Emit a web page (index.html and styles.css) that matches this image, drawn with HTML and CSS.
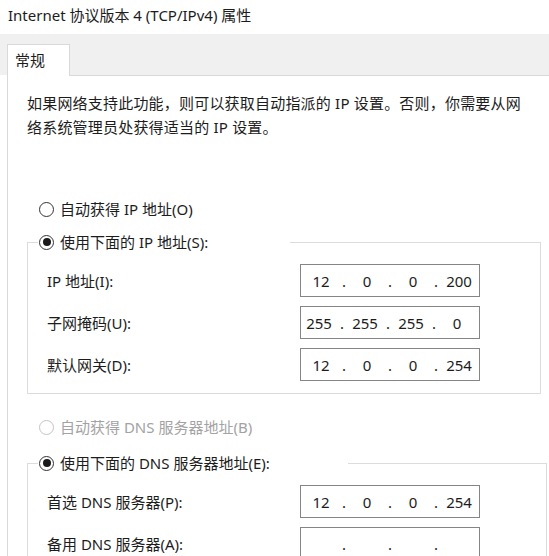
FILE: index.html
```html
<!DOCTYPE html>
<html lang="zh-CN">
<head>
<meta charset="utf-8">
<title>Internet 协议版本 4 (TCP/IPv4) 属性</title>
<link rel="stylesheet" href="styles.css">
</head>
<body>
<div class="title">Internet 协议版本 4 (TCP/IPv4) 属性</div>
<div class="tabstrip">
  <div class="tab">常规</div>
</div>
<div class="panel">
  <p class="desc">如果网络支持此功能，则可以获取自动指派的 IP 设置。否则，你需要从网<br>络系统管理员处获得适当的 IP 设置。</p>

  <div class="radio radio-first"><span class="dot-radio"></span><span>自动获得 IP 地址(O)</span></div>

  <fieldset class="group group-ip">
    <legend class="legend legend-ip"><span class="dot-radio checked"></span><span>使用下面的 IP 地址(S):</span></legend>
    <div class="row">
      <span class="label">IP 地址(I):</span>
      <div class="ip"><span class="oct">12</span><span class="sep">.</span><span class="oct">0</span><span class="sep">.</span><span class="oct">0</span><span class="sep">.</span><span class="oct">200</span></div>
    </div>
    <div class="row">
      <span class="label">子网掩码(U):</span>
      <div class="ip ip-shift"><span class="oct">255</span><span class="sep">.</span><span class="oct">255</span><span class="sep">.</span><span class="oct">255</span><span class="sep">.</span><span class="oct">0</span></div>
    </div>
    <div class="row">
      <span class="label">默认网关(D):</span>
      <div class="ip"><span class="oct">12</span><span class="sep">.</span><span class="oct">0</span><span class="sep">.</span><span class="oct">0</span><span class="sep">.</span><span class="oct">254</span></div>
    </div>
  </fieldset>

  <div class="radio radio-disabled"><span class="dot-radio disabled"></span><span>自动获得 DNS 服务器地址(B)</span></div>

  <fieldset class="group group-dns">
    <legend class="legend legend-dns"><span class="dot-radio checked"></span><span>使用下面的 DNS 服务器地址(E):</span></legend>
    <div class="row">
      <span class="label">首选 DNS 服务器(P):</span>
      <div class="ip"><span class="oct">12</span><span class="sep">.</span><span class="oct">0</span><span class="sep">.</span><span class="oct">0</span><span class="sep">.</span><span class="oct">254</span></div>
    </div>
    <div class="row">
      <span class="label">备用 DNS 服务器(A):</span>
      <div class="ip"><span class="oct"></span><span class="sep">.</span><span class="oct"></span><span class="sep">.</span><span class="oct"></span><span class="sep">.</span><span class="oct"></span></div>
    </div>
  </fieldset>
</div>
</body>
</html>
```

FILE: styles.css
```css
* { box-sizing: border-box; }

html, body {
  margin: 0;
  padding: 0;
  background: #ffffff;
  overflow: hidden;
}

body {
  width: 549px;
  height: 556px;
  font-family: "Noto Sans", "Noto Sans CJK SC", sans-serif;
  font-size: 15px;
  color: #1c1c1c;
}

.title {
  height: 34px;
  line-height: 30px;
  padding-left: 8px;
  white-space: nowrap;
}

.tabstrip {
  height: 41px;
  background: #f0f0f0;
  padding-left: 7px;
  display: flex;
  align-items: flex-end;
}

.tab {
  width: 63px;
  height: 32px;
  background: #ffffff;
  border: 1px solid #d9d9d9;
  border-bottom: none;
  margin-bottom: -1px;
  padding-left: 7px;
  line-height: 30px;
  position: relative;
  z-index: 1;
}

.panel {
  width: 542px;
  margin-left: 7px;
  border-top: 1px solid #d9d9d9;
  border-left: 1px solid #d9d9d9;
  padding: 15px 0 0 19px;
  height: 481px;
  overflow: hidden;
}

.desc {
  margin: 0;
  line-height: 24px;
  white-space: nowrap;
  letter-spacing: 0.2px;
}

.radio {
  display: flex;
  align-items: center;
  height: 20px;
  line-height: 20px;
  padding-left: 12px;
  white-space: nowrap;
}

.radio-first { margin-top: 60px; }

.radio-disabled {
  margin-top: 23px;
  color: #a3a3a3;
}

.dot-radio {
  width: 15px;
  height: 15px;
  border-radius: 50%;
  border: 1px solid #333333;
  margin-right: 6px;
  flex: none;
  background: #ffffff;
  position: relative;
}

.dot-radio.checked::after {
  content: "";
  position: absolute;
  left: 2.5px;
  top: 2.5px;
  width: 8px;
  height: 8px;
  border-radius: 50%;
  background: #1a1a1a;
}

.dot-radio.disabled { border-color: #c4c4c4; }

.group {
  margin: 0;
  padding: 12px 0 12px 19px;
  border: 1px solid #dcdcdc;
  width: 514px;
}

.group-ip { margin-top: 13px; }
.group-dns { margin-top: 16px; width: 520px; }

.legend {
  display: flex;
  align-items: center;
  height: 20px;
  line-height: 20px;
  padding: 0 0 0 1px;
  margin-left: -9px;
  background: #ffffff;
  white-space: nowrap;
}

.legend-ip { width: 252px; }
.legend-dns { width: 310px; }

.row {
  display: flex;
  align-items: center;
  height: 33px;
}

.row + .row { margin-top: 9px; }

.label {
  width: 253px;
  flex: none;
  white-space: nowrap;
}

.ip {
  width: 180px;
  height: 33px;
  border: 1px solid #858585;
  display: flex;
  align-items: center;
  padding: 0 2px;
  background: #ffffff;
  flex: none;
}

.ip-shift { padding-left: 0; }

.oct {
  width: 36px;
  text-align: center;
}

.sep {
  width: 10px;
  text-align: center;
}
```
